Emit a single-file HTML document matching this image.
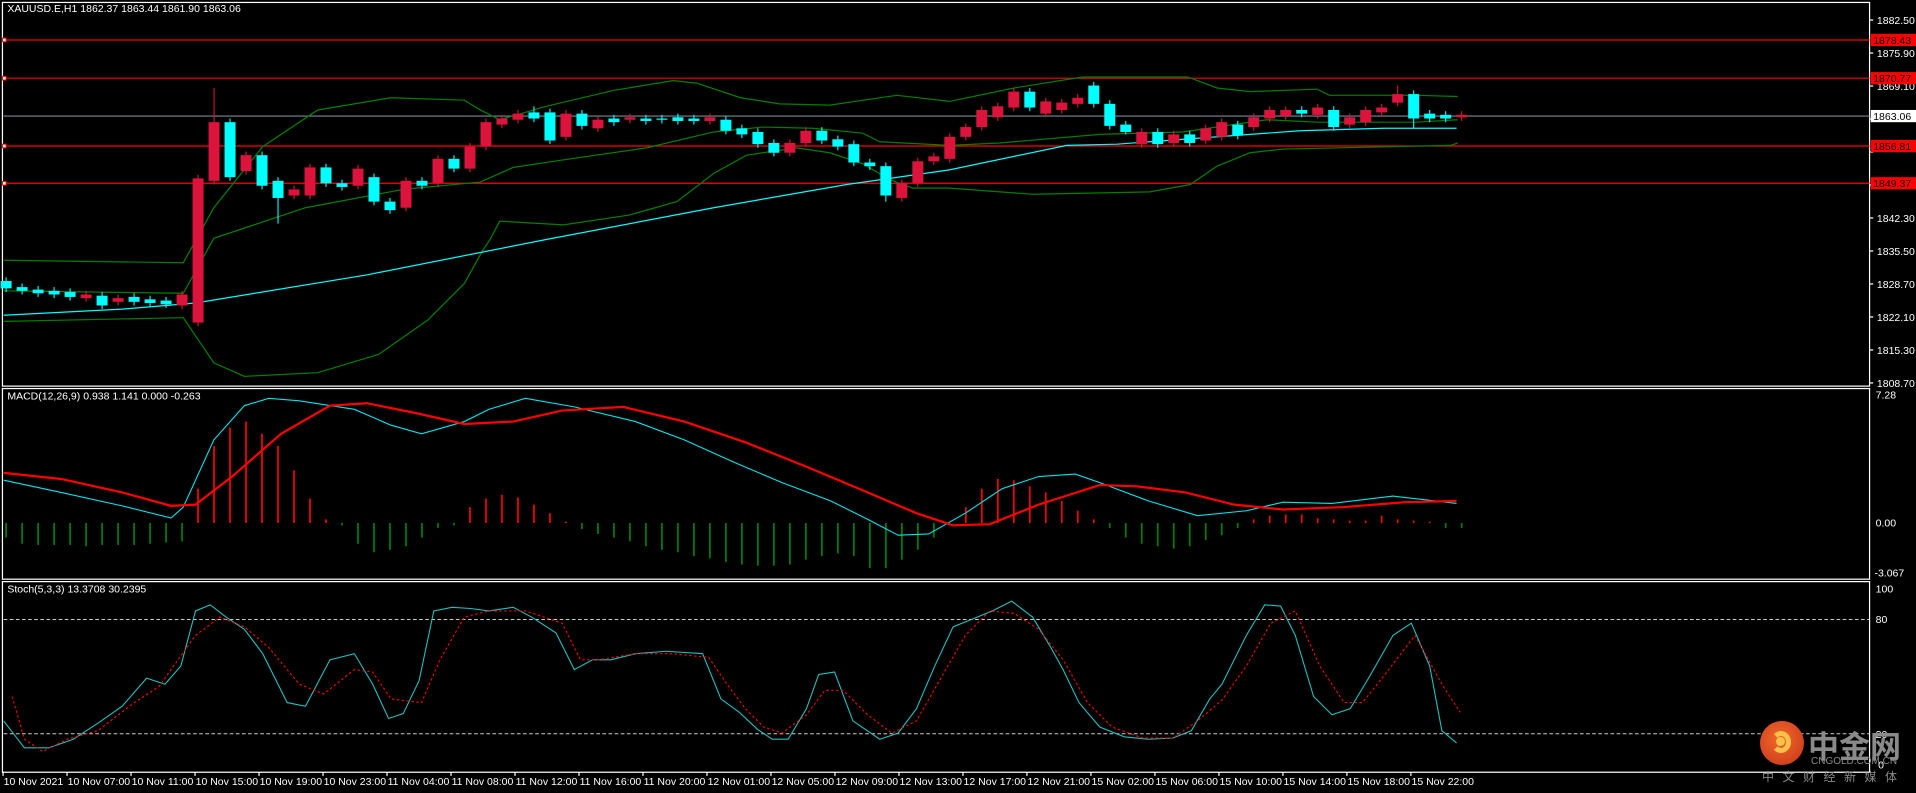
<!DOCTYPE html>
<html><head><meta charset="utf-8"><style>
html,body{margin:0;padding:0;background:#000;width:1916px;height:793px;overflow:hidden}
svg{position:absolute;left:0;top:0}
.t{font-family:"Liberation Sans",sans-serif;fill:#fff}
.wm{position:absolute;font-family:"Liberation Sans","Noto Sans CJK SC",sans-serif;color:#8a8a8a;white-space:nowrap}
</style></head><body>
<svg id="c" width="1916" height="793" viewBox="0 0 1568 649" preserveAspectRatio="none" xmlns="http://www.w3.org/2000/svg">
<rect width="1568" height="649" fill="#000"/>
<g fill="none" stroke="#fff" stroke-width="1">
<rect x="2" y="2" width="1528" height="314"/>
<rect x="2" y="318" width="1528" height="156"/>
<rect x="2" y="476" width="1528" height="156"/>
</g>
<g id="g"></g>
<g class="t" font-size="8.6">
<text x="6" y="10">XAUUSD.E,H1  1862.37 1863.44 1861.90 1863.06</text>
<text x="6" y="327">MACD(12,26,9) 0.938 1.141 0.000 -0.263</text>
<text x="6" y="485">Stoch(5,3,3) 13.3708 30.2395</text>
</g>
<g id="ax" class="t" font-size="8.6" fill="#fff"></g>
</svg>
<div style="position:absolute;left:1760px;top:721px;width:44px;height:44px;border-radius:50%;background:radial-gradient(circle at 45% 40%,#f06a2a,#c8321a)"></div>
<div style="position:absolute;left:1771px;top:731px;width:20px;height:22px;border-radius:50%;border:5px solid #f7c24a;border-left-color:transparent;box-sizing:border-box"></div>
<div style="position:absolute;left:1776px;top:737px;width:9px;height:9px;border-radius:50%;background:#f7c24a"></div>
<div class="wm" style="left:1808px;top:722px;font-size:31px;font-weight:bold;font-family:'Noto Sans CJK SC',sans-serif">中金网</div>
<div class="wm" style="left:1811px;top:756px;font-size:10px">CNGOLD.COM.CN</div>
<div class="wm" style="left:1762px;top:768px;font-size:12px;letter-spacing:8.5px;font-family:'Noto Sans CJK SC',sans-serif">中文财经新媒体</div>
<script>
var NS="http://www.w3.org/2000/svg",G=document.getElementById('g'),AX=document.getElementById('ax');
function el(p,n,a,txt){var e=document.createElementNS(NS,n);for(var k in a)e.setAttribute(k,a[k]);if(txt)e.textContent=txt;p.appendChild(e);return e}
function pl(pts,col,w,dash){el(G,'polyline',{points:pts.map(function(p){return p.join(',')}).join(' '),fill:'none',stroke:col,'stroke-width':w,'stroke-dasharray':dash||'none'})}
[32.7,64,119.5,150].forEach(function(y){el(G,'line',{x1:3,x2:1530,y1:y,y2:y,stroke:'#f00','stroke-width':1});el(G,'rect',{x:2,y:y-1.5,width:3,height:3,fill:'#fff',stroke:'#f00','stroke-width':0.8})});
el(G,'line',{x1:3,x2:1530,y1:95,y2:95,stroke:'#778899','stroke-width':0.9});
// upper band
pl([[3,213],[150,215],[175,170],[215,120],[260,90],[320,80],[380,82],[393,90],[409,98],[447,87],[502,74],[551,66],[570,68],[606,80],[638,85],[679,86],[734,78],[777,83],[830,72],[886,63],[972,63],[996,72],[1023,75],[1078,73],[1088,78],[1159,78],[1193,79]],'#008000',1);
// middle band
pl([[3,238],[150,240],[175,195],[250,170],[330,155],[393,149],[420,137],[460,131],[529,121],[584,108],[624,104],[665,105],[706,109],[720,116],[777,119],[818,117],[900,110],[968,108],[1009,102],[1037,98],[1078,100],[1159,100],[1193,98]],'#008000',1);
// lower band
pl([[3,263],[150,260],[175,297],[200,308],[260,305],[310,290],[350,262],[380,232],[395,205],[401,196],[409,181],[461,184],[515,176],[554,165],[584,142],[611,127],[652,121],[679,125],[706,134],[728,147],[747,154],[777,154],[845,159],[941,157],[974,151],[996,136],[1023,125],[1050,122],[1187,119],[1193,117]],'#008000',1);
// MA
pl([[3,258],[100,253],[160,248],[300,225],[447,196],[584,170],[693,151],[777,139],[873,119],[914,118],[1023,110],[1064,107],[1132,105],[1192,105]],'#00ffff',1);
var C=[[230,236,0],[235,238,0],[237,240,0],[238,241,0],[239,243,0],[241,244,1],[242,250,0],[244,247,1],[243,247,0],[245,248,0],[246,249,0],[241,250,1],[146,264,1],[100,148,1],[100,145,0],[127,140,1],[127,152,0],[148,162,0],[155,160,1],[137,160,1],[137,150,0],[150,153,0],[138,152,1],[145,165,0],[165,172,0],[148,170,1],[148,152,0],[130,150,1],[130,138,0],[120,138,1],[100,120,1],[97,102,1],[93,98,1],[92,97,0],[92,115,0],[93,112,1],[93,103,0],[98,105,1],[97,100,0],[96,98,1],[97,99,0],[97,98,0],[96,99,0],[97,99,0],[96,99,1],[98,107,0],[105,110,0],[108,118,0],[117,125,0],[117,125,1],[107,117,1],[107,115,0],[114,120,0],[118,133,0],[133,136,0],[136,160,0],[150,162,1],[132,150,1],[128,132,1],[112,130,1],[104,112,1],[90,104,1],[87,96,1],[75,88,1],[75,88,0],[83,93,1],[84,90,1],[80,85,1],[70,85,0],[85,103,0],[102,108,0],[108,118,1],[108,118,0],[110,117,1],[110,117,0],[105,115,1],[100,112,1],[102,111,0],[96,104,1],[90,97,1],[90,95,1],[90,93,0],[88,94,1],[90,104,0],[96,102,1],[90,100,1],[88,92,1],[77,84,1],[77,97,0],[93,97,0],[94,97,0],[94,96,1]];
var W={12:258,13:72,17:183,55:165,34:118,33:87,70:110,83:107,87:70,88:105};
C.forEach(function(c,i){var x=5+i*13.09,col=c[2]?'#dc143c':'#00ffff',lo=W[i]!==undefined&&W[i]>c[1]?W[i]:c[1]+3,hi=W[i]!==undefined&&W[i]<c[0]?W[i]:c[0]-3;
el(G,'line',{x1:x,x2:x,y1:hi,y2:lo,stroke:col,'stroke-width':0.9});el(G,'rect',{x:x-4.5,y:c[0],width:9,height:Math.max(1,c[1]-c[0]),fill:col})});
var H=[440,445,446,446,446,447,446,446,446,445,444,443,400,365,350,345,355,365,385,408,425,430,445,452,450,447,440,432,430,415,408,405,407,413,420,427,433,437,440,443,447,450,452,455,457,460,462,463,463,462,458,455,453,455,465,465,458,450,440,430,415,400,392,393,398,403,410,418,425,432,440,445,447,449,447,442,438,432,425,422,421,421,424,425,426,426,422,425,426,427,432,432];
H.forEach(function(v,i){var x=5+i*13.09;el(G,'line',{x1:x,x2:x,y1:428,y2:v,stroke:v>428?'#008000':'#ff0000','stroke-width':1.4})});
pl([[3,393],[50,403],[100,414],[140,424],[150,415],[175,360],[200,332],[220,326],[245,328],[290,335],[320,348],[345,355],[380,345],[400,335],[430,326],[470,333],[520,345],[560,360],[600,378],[640,395],[680,410],[710,425],[735,438],[760,437],[790,420],[820,400],[850,390],[880,388],[900,395],[940,410],[980,422],[1020,418],[1050,411],[1090,412],[1140,406],[1192,412]],'#00e5ee',0.9);
pl([[3,387],[50,392],[100,403],[140,414],[160,413],[190,390],[230,355],[270,332],[300,330],[340,338],[380,347],[420,345],[460,336],[510,333],[560,345],[610,362],[660,382],[710,403],[750,420],[780,430],[810,429],[850,413],[900,397],[930,398],[970,403],[1010,413],[1050,417],[1100,415],[1150,411],[1192,410]],'#ff0000',1.8);
[507,600.5].forEach(function(y){el(G,'line',{x1:3,x2:1530,y1:y,y2:y,stroke:'#ccc','stroke-width':0.8,'stroke-dasharray':'3,2'})});
pl([[3,590],[20,612],[40,612],[60,605],[80,592],[100,578],[120,555],[135,560],[148,545],[160,500],[172,495],[185,505],[200,515],[215,535],[235,575],[250,578],[270,540],[290,535],[305,560],[318,588],[330,584],[343,557],[355,500],[370,497],[385,498],[400,500],[420,497],[435,505],[455,518],[470,548],[485,540],[500,540],[520,535],[545,533],[575,535],[590,572],[605,583],[620,597],[632,605],[645,605],[660,580],[670,552],[683,550],[698,590],[720,605],[735,600],[750,580],[765,545],[780,513],[800,505],[812,500],[828,492],[845,505],[860,530],[870,548],[883,575],[900,595],[920,603],[940,605],[960,604],[975,598],[990,572],[1000,560],[1020,520],[1035,495],[1048,496],[1060,520],[1075,570],[1090,585],[1105,580],[1120,555],[1140,520],[1155,510],[1170,545],[1180,598],[1192,608]],'#20c0c0',0.9);
pl([[10,570],[20,605],[35,615],[55,605],[80,598],[110,575],[130,562],[160,520],[180,505],[200,513],[220,530],[245,560],[265,568],[290,548],[305,550],[320,572],[345,575],[360,540],[380,505],[400,500],[430,500],[460,510],[475,540],[490,540],[520,535],[550,535],[580,538],[595,560],[610,580],[625,595],[640,600],[660,585],[675,565],[690,565],[710,585],[730,600],[750,590],[770,555],[790,520],[810,500],[830,502],[850,515],[870,540],[890,575],[910,595],[935,604],[960,604],[980,590],[1000,573],[1020,545],[1040,510],[1060,500],[1080,545],[1100,575],[1115,575],[1135,550],[1158,520],[1180,560],[1195,583]],'#ff0000',0.9,'2,2');
var P=['1882.50','1875.90','1869.10','1863.06','1855.70','1849.37','1842.30','1835.50','1828.70','1822.10','1815.30','1808.70'];
for(var i=0;i<12;i++){var y=16.4+i*27;el(AX,'line',{x1:1530,x2:1533,y1:y,y2:y,stroke:'#fff'});if(i!=3&&i!=5&&i!=4)el(AX,'text',{x:1536,y:y+3.2},P[i])}
[[32.7,'1878.43'],[64,'1870.77'],[119.5,'1856.81'],[150,'1849.37']].forEach(function(r){el(AX,'rect',{x:1531,y:r[0]-5,width:37,height:10,fill:'#ff0000'});el(AX,'text',{x:1533,y:r[0]+3.2,fill:'#000'},r[1])});
el(AX,'rect',{x:1531,y:90,width:37,height:10,fill:'#fff'});el(AX,'text',{x:1533,y:98.2,fill:'#000'},'1863.06');
el(AX,'text',{x:1535,y:326},'7.28');el(AX,'text',{x:1535,y:431},'0.00');el(AX,'text',{x:1534,y:472},'-3.067');
el(AX,'text',{x:1535,y:485},'100');el(AX,'text',{x:1535,y:510},'80');el(AX,'text',{x:1535,y:604},'20');el(AX,'text',{x:1537,y:629},'0');
var T=['10 Nov 2021','10 Nov 07:00','10 Nov 11:00','10 Nov 15:00','10 Nov 19:00','10 Nov 23:00','11 Nov 04:00','11 Nov 08:00','11 Nov 12:00','11 Nov 16:00','11 Nov 20:00','12 Nov 01:00','12 Nov 05:00','12 Nov 09:00','12 Nov 13:00','12 Nov 17:00','12 Nov 21:00','15 Nov 02:00','15 Nov 06:00','15 Nov 10:00','15 Nov 14:00','15 Nov 18:00','15 Nov 22:00'];
T.forEach(function(s,i){var x=2.5+i*52.37;el(AX,'line',{x1:x,x2:x,y1:632,y2:635,stroke:'#fff'});el(AX,'text',{x:x+0.5,y:642.5},s)});
</script>
</body></html>
